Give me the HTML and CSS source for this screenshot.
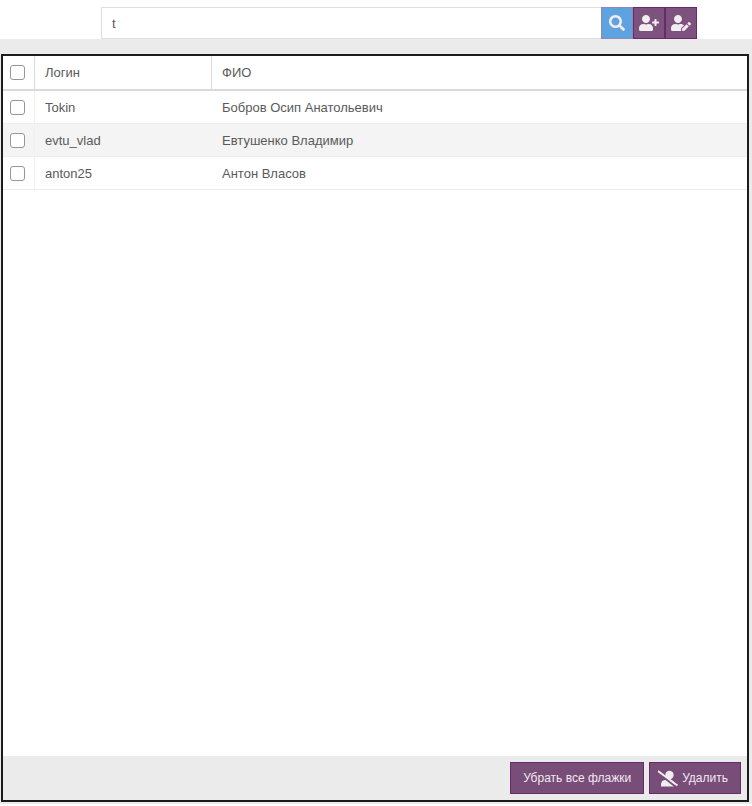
FILE: index.html
```
<!DOCTYPE html>
<html lang="ru">
<head>
<meta charset="utf-8">
<title>Пользователи</title>
<link rel="stylesheet" href="styles.css">
</head>
<body>
<form class="toolbar">
  <input class="search" type="text" value="t" aria-label="Поиск">
  <button class="tool tool-search" type="button" aria-label="Найти">
    <svg viewBox="0 0 512 512"><path d="M505 442.700 405.300 343c-4.500-4.500-10.600-7-17-7H372c27.600-35.300 44-79.700 44-128C416 93.100 322.900 0 208 0S0 93.100 0 208s93.100 208 208 208c48.300 0 92.700-16.400 128-44v16.300c0 6.400 2.500 12.500 7 17l99.700 99.700c9.400 9.400 24.600 9.400 33.900 0l28.300-28.300c9.400-9.400 9.400-24.600.1-34zM208 336c-70.700 0-128-57.200-128-128 0-70.700 57.200-128 128-128 70.700 0 128 57.200 128 128 0 70.700-57.200 128-128 128z"/></svg>
  </button>
  <button class="tool" type="button" aria-label="Добавить пользователя">
    <svg class="wide" viewBox="0 0 640 512"><path d="M624 208h-64v-64c0-8.800-7.200-16-16-16h-32c-8.800 0-16 7.200-16 16v64h-64c-8.800 0-16 7.200-16 16v32c0 8.800 7.200 16 16 16h64v64c0 8.800 7.200 16 16 16h32c8.800 0 16-7.200 16-16v-64h64c8.800 0 16-7.200 16-16v-32c0-8.800-7.200-16-16-16zM224 256c70.700 0 128-57.300 128-128S294.700 0 224 0 96 57.300 96 128s57.300 128 128 128zm89.600 32h-16.700c-22.200 10.200-46.900 16-72.900 16s-50.600-5.800-72.900-16h-16.700C60.200 288 0 348.200 0 422.400V464c0 26.500 21.500 48 48 48h352c26.500 0 48-21.500 48-48v-41.600c0-74.200-60.200-134.400-134.400-134.400z"/></svg>
  </button>
  <button class="tool" type="button" aria-label="Изменить пользователя">
    <svg class="wide" viewBox="0 0 640 512"><path d="M224 256c70.700 0 128-57.300 128-128S294.700 0 224 0 96 57.300 96 128s57.300 128 128 128zm89.600 32h-16.700c-22.200 10.200-46.900 16-72.900 16s-50.600-5.800-72.900-16h-16.700C60.200 288 0 348.200 0 422.400V464c0 26.500 21.500 48 48 48h274.900c-2.400-6.800-3.400-14-2.600-21.300l6.800-60.900 1.200-11.100 7.900-7.900 77.300-77.300c-24.500-27.700-60-45.500-99.900-45.500zm45.300 145.300-6.800 61c-1.100 10.200 7.500 18.800 17.600 17.600l60.900-6.800 137.900-137.900-71.700-71.700-137.900 137.800zM633 268.900 595.100 231c-9.300-9.300-24.500-9.300-33.800 0l-37.800 37.800-4.100 4.100 71.800 71.700 41.800-41.800c9.300-9.400 9.300-24.500 0-33.900z"/></svg>
  </button>
</form>
<main class="page">
  <section class="panel">
    <table class="grid">
      <thead>
        <tr>
          <th class="check"><input type="checkbox" aria-label="Выбрать все"></th>
          <th class="login">Логин</th>
          <th>ФИО</th>
        </tr>
      </thead>
      <tbody>
        <tr>
          <td class="check"><input type="checkbox" aria-label="Tokin"></td>
          <td>Tokin</td>
          <td>Бобров Осип Анатольевич</td>
        </tr>
        <tr>
          <td class="check"><input type="checkbox" aria-label="evtu_vlad"></td>
          <td>evtu_vlad</td>
          <td>Евтушенко Владимир</td>
        </tr>
        <tr>
          <td class="check"><input type="checkbox" aria-label="anton25"></td>
          <td>anton25</td>
          <td>Антон Власов</td>
        </tr>
      </tbody>
    </table>
    <footer class="actions">
      <button class="action" type="button">Убрать все флажки</button>
      <button class="action action-icon" type="button">
        <svg viewBox="0 0 20 17"><circle cx="11.500" cy="5" r="4.200"/><path d="M3 16.500v-2c0-2.500 1.500-4.500 4.500-4.500H12c2.500 0 4.500 2 4.500 4.500v1c0 .7-.3 1-1 1z"/><path class="gap" d="M-1 2 18 17"/><path class="slash" d="M0 1 19.500 15.500"/></svg>
        Удалить
      </button>
    </footer>
  </section>
</main>
</body>
</html>
```
FILE: styles.css
```
* {
  box-sizing: border-box;
}

body {
  margin: 0;
  min-height: 100vh;
  padding-bottom: 2px;
  display: flex;
  flex-direction: column;
  background: #fff;
  color: #5a5a5a;
  font: 13px/17px "Liberation Sans", Arial, sans-serif;
}

button,
input {
  font: inherit;
  color: inherit;
}

.toolbar {
  display: flex;
  padding: 7px 55px 0 101px;
}

.search {
  flex: 1;
  min-width: 0;
  height: 32px;
  padding: 0 10px;
  border: 1px solid #dedede;
  border-right: 0;
  background: #fff;
  outline: 0;
}

.tool {
  display: flex;
  align-items: center;
  justify-content: center;
  width: 32px;
  height: 32px;
  padding: 0;
  border: 1px solid #672c67;
  background: #7e527e;
}

.tool-search {
  border-color: #8c87bd;
  background: #5ea2df;
}

svg {
  width: 16px;
  height: 16px;
  fill: #f1edf1;
}

svg.wide {
  width: 20px;
  height: 16px;
}

.page {
  flex: 1;
  display: flex;
  padding: 15px 3px 2px 1px;
  background: #ebebeb;
}

.panel {
  flex: 1;
  display: flex;
  flex-direction: column;
  border: 2px solid #1c1c1c;
  background: #fff;
}

.grid {
  width: 100%;
  table-layout: fixed;
  border-collapse: separate;
  border-spacing: 0;
}

th,
td {
  height: 33px;
  padding: 0 10px;
  border-bottom: 1px solid #ededed;
  text-align: left;
  font-weight: 400;
}

th {
  height: 35px;
  border-bottom: 2px solid #dadada;
}

th:not(:last-child) {
  border-right: 1px solid #dadada;
}

.check {
  width: 32px;
  padding: 0 0 0 7px;
}

td.check {
  border-right: 1px solid #f0f0f0;
}

.login {
  width: 177px;
}

tbody tr:nth-child(even) {
  background: #f4f4f4;
}

input[type="checkbox"] {
  appearance: none;
  display: block;
  width: 15px;
  height: 15px;
  margin: 0;
  border: 1px solid #969696;
  border-radius: 3px;
  background: #fff;
}

.actions {
  display: flex;
  justify-content: flex-end;
  gap: 5px;
  margin-top: auto;
  padding: 6px;
  background: #ebebeb;
}

.action {
  display: flex;
  align-items: center;
  gap: 4px;
  height: 32px;
  padding: 0 12px;
  border: 1px solid #672c67;
  background: #784d78;
  color: #f1e9f1;
  font-size: 12px;
}

.action-icon {
  padding-left: 8px;
}

.action svg {
  width: 20px;
  height: 17px;
}

.gap {
  stroke: #784d78;
  stroke-width: 2;
}

.slash {
  stroke: #f1edf1;
  stroke-width: 2;
}
```
